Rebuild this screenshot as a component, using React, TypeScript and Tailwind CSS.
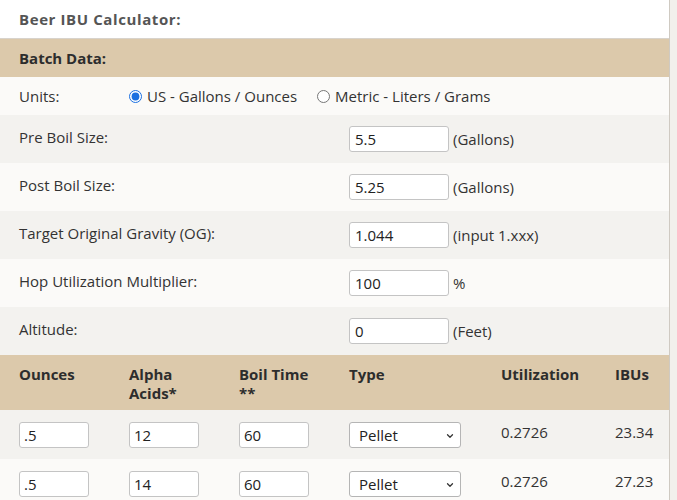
import { ChevronDown } from 'lucide-react'

const font = { fontFamily: '"Open Sans", "Liberation Sans", sans-serif' }

interface FieldRowProps {
  label: string
  value: string
  unit: string
  shade: boolean
}

function FieldRow({ label, value, unit, shade }: FieldRowProps) {
  return (
    <div className={`flex h-[48px] items-start px-[19px] pt-[11px] ${shade ? 'bg-[#f3f2ef]' : 'bg-[#fbfaf8]'}`}>
      <div className="w-[330px] pt-[1px] text-[15px] leading-[20px] text-[#333]">{label}</div>
      <input
        readOnly
        value={value}
        className="h-[26px] w-[100px] rounded-[3px] border border-[#c4c4c4] bg-white px-[5px] text-[15px] text-[#222] outline-none"
      />
      <span className="ml-[4px] pt-[3px] text-[15px] leading-[20px] text-[#333]">{unit}</span>
    </div>
  )
}

const hops = [
  { oz: '.5', aa: '12', time: '60', util: '0.2726', ibu: '23.34' },
  { oz: '.5', aa: '14', time: '60', util: '0.2726', ibu: '27.23' },
]

function SmallInput({ value }: { value: string }) {
  return (
    <input
      readOnly
      value={value}
      className="h-[26px] w-[70px] rounded-[3px] border border-[#c4c4c4] bg-white px-[4px] text-[15px] text-[#222] outline-none"
    />
  )
}

export default function App() {
  return (
    <div className="h-[500px] overflow-hidden bg-[#f2f0ec]" style={font}>
      <div className="w-[670px] border-r border-[#cfcac2] bg-white">
        {/* title */}
        <div className="flex h-[39px] items-center border-b border-[#d8d3cc] px-[19px]">
          <h1 className="text-[15px] font-bold tracking-[0.6px] text-[#555]">Beer IBU Calculator:</h1>
        </div>

        {/* batch data */}
        <div className="flex h-[38px] items-center bg-[#dcc9ab] px-[19px]">
          <h2 className="text-[15px] font-bold text-[#2d2d2d]">Batch Data:</h2>
        </div>
        <div className="flex h-[38px] items-center bg-[#fbfaf8] px-[19px] text-[15px] text-[#333]">
          <span className="w-[110px]">Units:</span>
          <label className="flex items-center gap-[5px]">
            <input type="radio" name="units" defaultChecked className="m-0 h-[13px] w-[13px] accent-[#1a6fe0]" />
            US - Gallons / Ounces
          </label>
          <label className="ml-[20px] flex items-center gap-[5px]">
            <input type="radio" name="units" className="m-0 h-[13px] w-[13px]" />
            Metric - Liters / Grams
          </label>
        </div>
        <FieldRow label="Pre Boil Size:" value="5.5" unit="(Gallons)" shade />
        <FieldRow label="Post Boil Size:" value="5.25" unit="(Gallons)" shade={false} />
        <FieldRow label="Target Original Gravity (OG):" value="1.044" unit="(input 1.xxx)" shade />
        <FieldRow label="Hop Utilization Multiplier:" value="100" unit="%" shade={false} />
        <FieldRow label="Altitude:" value="0" unit="(Feet)" shade />

        {/* hop table */}
        <div className="grid h-[55px] grid-cols-[110px_110px_110px_152px_114px_1fr] bg-[#dcc9ab] pl-[19px] pt-[10px] text-[15px] font-bold leading-[19px] text-[#2d2d2d]">
          <div>Ounces</div>
          <div>Alpha<br />Acids*</div>
          <div>Boil Time<br />**</div>
          <div>Type</div>
          <div>Utilization</div>
          <div>IBUs</div>
        </div>
        {hops.map((h, i) => (
          <div
            key={i}
            className={`grid h-[49px] grid-cols-[110px_110px_110px_152px_114px_1fr] items-start pl-[19px] pt-[12px] text-[15px] text-[#333] ${i % 2 === 0 ? 'bg-[#f3f2ef]' : 'bg-[#fbfaf8]'}`}
          >
            <SmallInput value={h.oz} />
            <SmallInput value={h.aa} />
            <SmallInput value={h.time} />
            <div className="relative h-[26px] w-[112px] rounded-[3px] border border-[#b5b5b5] bg-white">
              <span className="absolute left-[9px] top-[3px] leading-[18px] text-[#222]">Pellet</span>
              <ChevronDown className="absolute right-[5px] top-[8px] h-[10px] w-[10px] text-[#333]" strokeWidth={3} />
            </div>
            <div className="leading-[20px]">{h.util}</div>
            <div className="leading-[20px]">{h.ibu}</div>
          </div>
        ))}
      </div>
    </div>
  )
}
